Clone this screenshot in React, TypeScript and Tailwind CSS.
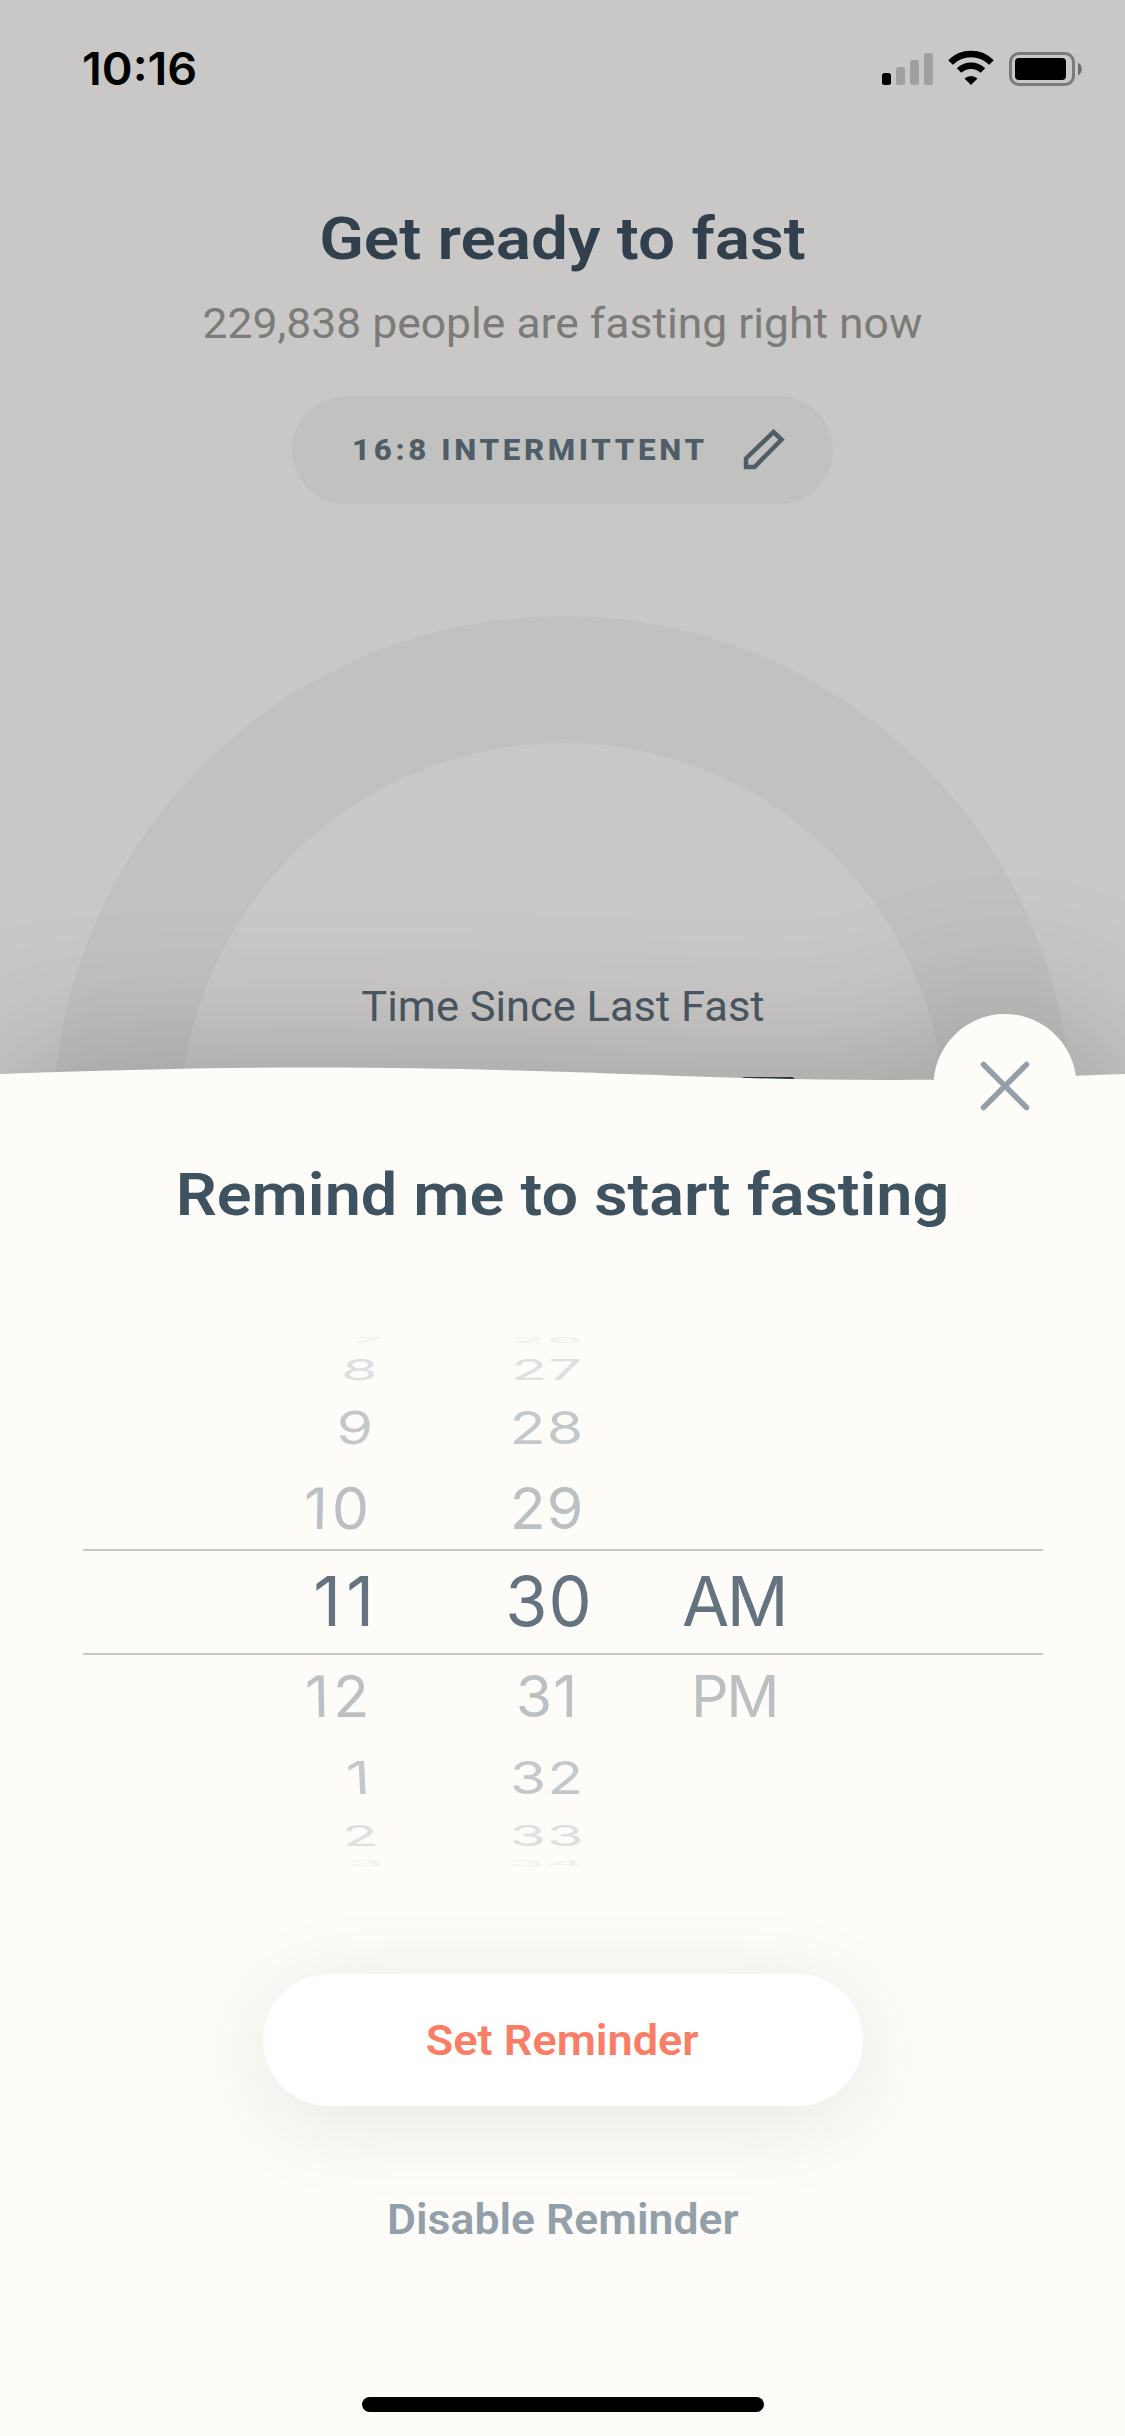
import clsx from 'clsx';

interface WheelRow {
  hour: string;
  minute: string;
  period?: string;
  // row height, squash and tint for the position on the drum
  row: string;
  glyphs: string;
  hourShift: string;
}

const wheel: WheelRow[] = [
  { hour: '7', minute: '26', row: 'h-[20px] text-[#f0efec]', glyphs: 'text-[59px] scale-y-[0.135]', hourShift: 'pr-0 -skew-x-3' },
  { hour: '8', minute: '27', row: 'h-[37px] text-[#dedfdf]', glyphs: 'text-[59px] scale-y-[0.48]', hourShift: 'pr-[5px] -skew-x-3' },
  { hour: '9', minute: '28', row: 'h-[79px] text-[#c3c8cb]', glyphs: 'text-[59px] scale-y-[0.77]', hourShift: 'pr-[10px] -skew-x-2' },
  { hour: '10', minute: '29', row: 'h-[83px] text-[#bbc1c3]', glyphs: 'text-[59px] scale-y-[0.97]', hourShift: 'pr-[10px] tracking-[4px] -skew-x-1' },
  { hour: '11', minute: '30', period: 'AM', row: 'h-[106px] border-y-2 border-[#c9c9c6] text-[#64737f]', glyphs: 'text-[68.5px]', hourShift: 'pr-[4px] tracking-[5px]' },
  { hour: '12', minute: '31', period: 'PM', row: 'h-[82px] text-[#bbc1c3]', glyphs: 'text-[59px] scale-y-[0.97]', hourShift: 'pr-[10px] tracking-[4px] skew-x-1' },
  { hour: '1', minute: '32', row: 'h-[79px] text-[#c3c8cb]', glyphs: 'text-[59px] scale-y-[0.77]', hourShift: 'pr-[13px] skew-x-2' },
  { hour: '2', minute: '33', row: 'h-[37px] text-[#dedfdf]', glyphs: 'text-[59px] scale-y-[0.48]', hourShift: 'pr-[5px] skew-x-3' },
  { hour: '3', minute: '34', row: 'h-[20px] text-[#f0efec]', glyphs: 'text-[59px] scale-y-[0.135]', hourShift: 'pr-0 skew-x-3' },
];

const StatusBar = () => (
  <div className="flex h-[132px] items-start justify-between pl-[82px] pr-[42px] pt-[42px]">
    <span className="origin-left scale-x-[1.04] font-['Inter'] text-[45px] font-semibold leading-[54px] text-black">
      10:16
    </span>
    <svg className="mt-[8px]" width="202" height="38" viewBox="0 0 202 38" fill="none">
      <rect x="1" y="23" width="9" height="12" rx="2.5" fill="#000" />
      <rect x="15" y="17" width="9" height="18" rx="2.5" fill="#a1a09f" />
      <rect x="29" y="10" width="9" height="25" rx="2.5" fill="#a1a09f" />
      <rect x="43" y="3" width="9" height="32" rx="2.5" fill="#a1a09f" />
      <path d="M69.5 12.5 A29 29 0 0 1 110.5 12.5" stroke="#000" strokeWidth="6.5" />
      <path d="M78 20.5 A17.5 17.5 0 0 1 102 20.5" stroke="#000" strokeWidth="6.5" />
      <path d="M83.5 28.5 A9.5 9.5 0 0 1 96.5 28.5 L90 35 Z" fill="#000" />
      <rect x="129.500" y="3.500" width="63" height="31" rx="8.500" stroke="#7b7a79" strokeWidth="3" />
      <rect x="134" y="8" width="51" height="22" rx="4" fill="#000" />
      <path d="M197 12.500 C202 15 202 23 197 25.500 Z" fill="#6f6e6d" />
    </svg>
  </div>
);

const Pencil = () => (
  <svg width="42" height="42" viewBox="0 0 42 42" fill="none">
    <path d="M3 29.500 L30.500 3 L38.500 10.500 L11.500 38 H3 Z" stroke="#4e5d68" strokeWidth="4.500" />
  </svg>
);

const FastingScreen = () => (
  <div className="flex h-full flex-col overflow-hidden">
    <StatusBar />
    <h1 className="mt-[72px] scale-x-[1.112] text-center text-[59px] font-semibold leading-[70px] text-[#32404d]">
      Get ready to fast
    </h1>
    <p className="mt-[25px] scale-x-[1.058] text-center text-[42px] leading-[50px] text-[#7b7b79]">
      229,838 people are fasting right now
    </p>
    <div className="mx-auto mt-[47px] flex h-[108px] w-[541px] items-center justify-between rounded-full bg-[#c1c1bf] pl-[60px] pr-[48px]">
      <span className="origin-left scale-x-[1.043] pb-[2px] text-[30px] font-extrabold tracking-[3.5px] text-[#4e5d68]">
        16:8 INTERMITTENT
      </span>
      <Pencil />
    </div>
    <div className="mx-auto mt-[112px] flex size-[1020px] shrink-0 flex-col items-center rounded-full border-[127px] border-[#c1c1bf] pt-[239px]">
      <p className="scale-x-[1.034] text-[42px] leading-[50px] text-[#4b5864]">Time Since Last Fast</p>
      <div className="ml-[410px] mt-[45px] h-[9px] w-[54px] rounded-sm bg-[#2c3c4a]" />
    </div>
  </div>
);

const TimeWheel = () => (
  <div className="ml-[83px] mr-[82px] mt-[100px] font-['Inter']">
    {wheel.map(({ hour, minute, period, row, glyphs, hourShift }) => (
      <div key={hour} className={clsx('flex items-center leading-none', row)}>
        <span className={clsx('flex h-0 w-[300px] items-center justify-end', glyphs, hourShift)}>{hour}</span>
        <span
          className={clsx('flex h-0 w-[332px] items-center justify-center tracking-[1px]', glyphs, period !== 'AM' && 'pr-[4px]')}
        >
          {minute}
        </span>
        <span className={clsx('flex h-0 w-[38px] items-center justify-center tracking-[-2.5px]', glyphs)}>{period}</span>
      </div>
    ))}
  </div>
);

const ReminderSheet = () => (
  <div className="absolute inset-x-0 bottom-0 flex h-[1422px] flex-col drop-shadow-[0_0_75px_rgba(0,0,0,0.22)]">
    {/* Wavy top edge with the close tab */}
    <svg className="block shrink-0" width="1125" height="120" viewBox="0 0 1125 120" fill="none">
      <path d="M0 60 C110 56 210 53.500 310 53.500 C560 53.500 700 66 880 66 C970 66 1040 63 1125 60 V120 H0 Z" fill="#fdfcf8" />
      <circle cx="1005" cy="71.500" r="71.500" fill="#fdfcf8" />
      <path d="M983.500 50.500 L1026.500 93.500 M1026.500 50.500 L983.500 93.500" stroke="#93a0aa" strokeWidth="5.500" strokeLinecap="round" />
    </svg>
    <div className="flex grow flex-col bg-[#fdfcf8]">
      <h2 className="mt-[26px] scale-x-[1.079] text-center text-[60px] font-semibold leading-[70px] text-[#3e525f]">
        Remind me to start fasting
      </h2>
      <TimeWheel />
      <button className="mx-auto mt-[101px] h-[132px] w-[600px] rounded-full bg-white text-[42px] font-semibold text-[#fa7d66] shadow-[0_15px_90px_rgba(0,0,0,0.09)]">
        <span className="inline-block scale-x-[1.073]">Set Reminder</span>
      </button>
      <button className="mx-auto mt-[89px] scale-x-[1.06] text-[42px] font-semibold leading-[50px] text-[#93a0a9]">
        Disable Reminder
      </button>
      <div className="mx-auto mb-[24px] mt-auto h-[15px] w-[402px] rounded-full bg-black" />
    </div>
  </div>
);

export default function App() {
  return (
    <div className="relative h-[2436px] w-[1125px] overflow-hidden bg-[#c9c8c6] font-['Roboto',sans-serif]">
      <FastingScreen />
      <ReminderSheet />
    </div>
  );
}
